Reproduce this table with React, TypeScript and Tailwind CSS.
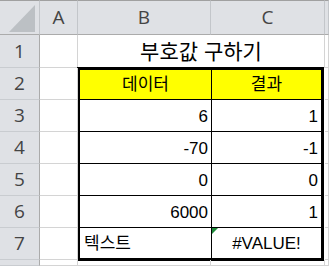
const headFont = "font-['Open_Sans','Noto_Sans',sans-serif]";

const rows = [
  { n: '3', b: '6', c: '1' },
  { n: '4', b: '-70', c: '-1' },
  { n: '5', b: '0', c: '0' },
  { n: '6', b: '6000', c: '1' },
];

const RowHead = ({ children }: { children?: React.ReactNode }) => (
  <div
    className={`bg-[#dfe1e5] border-r border-b border-r-[#ababab] border-b-[#c9ccd0] text-[#444] text-[19px] flex items-center justify-center ${headFont}`}
  >
    {children}
  </div>
);

const ColHead = ({ children }: { children?: React.ReactNode }) => (
  <div
    className={`bg-[#dfe1e5] border-t border-b border-r border-t-[#a0a0a0] border-b-[#ababab] border-r-[#c3c6ca] text-[#444] text-[19px] flex items-center justify-center ${headFont}`}
  >
    {children}
  </div>
);

const Cell = ({ children, className = '' }: { children?: React.ReactNode; className?: string }) => (
  <div className={`border-r border-b border-[#d4d4d4] ${className}`}>{children}</div>
);

export default function App() {
  return (
    <div className="w-[329px] h-[266px] overflow-hidden bg-white font-['Liberation_Sans','Noto_Sans_CJK_KR',sans-serif] text-black">
      <div className="grid h-full grid-cols-[40px_38px_133px_114px_1fr] grid-rows-[35px_33px_repeat(6,32px)_1fr]">
        {/* column headers */}
        <div className="bg-[#dfe1e5] border-t border-b border-r border-t-[#a0a0a0] border-b-[#ababab] border-r-[#c3c6ca]">
          <svg width="39" height="33" viewBox="0 0 39 33">
            <polygon points="35,4 35,31 9,31" fill="#bcc0c4" />
          </svg>
        </div>
        <ColHead>A</ColHead>
        <ColHead>B</ColHead>
        <ColHead>C</ColHead>
        <ColHead />

        {/* row 1 */}
        <RowHead>1</RowHead>
        <Cell />
        <Cell className="col-span-2 flex items-center justify-center text-[21px] pt-[1px]">부호값 구하기</Cell>
        <Cell />

        {/* table B2:C7 */}
        <div className="col-start-3 col-span-2 row-start-3 row-span-6 -ml-px -mt-px mr-px -mb-px border-[3px] border-black grid grid-cols-[132px_109px] grid-rows-[30px_32px_32px_32px_32px_30px] text-[17px] leading-[20px]">
          <div className="bg-[#ffff00] border-r border-b border-black flex items-end justify-center pb-[4px]">데이터</div>
          <div className="bg-[#ffff00] border-b border-black flex items-end justify-center pb-[4px]">결과</div>
          {rows.map((r) => (
            <div key={r.n} className="contents">
              <div className="border-r border-b border-black flex items-end justify-end pr-[3px] pb-[4px]">{r.b}</div>
              <div className="border-b border-black flex items-end justify-end pr-[3px] pb-[4px]">{r.c}</div>
            </div>
          ))}
          <div className="border-r border-black flex items-end pl-[4px] pb-[4px]">텍스트</div>
          <div className="relative flex items-end justify-center pb-[4px]">
            <div className="absolute top-0 left-0 w-0 h-0 border-t-[6px] border-r-[6px] border-t-[#1e8a3a] border-r-transparent" />
            #VALUE!
          </div>
        </div>

        {/* rows 2-7 left and right of the table */}
        {['2', '3', '4', '5', '6', '7'].map((n) => (
          <div key={n} className="contents">
            <RowHead>{n}</RowHead>
            <Cell />
            <Cell />
          </div>
        ))}

        {/* row 8, only its top shows */}
        <RowHead />
        <Cell />
        <Cell />
        <Cell />
        <Cell />
      </div>
    </div>
  );
}
